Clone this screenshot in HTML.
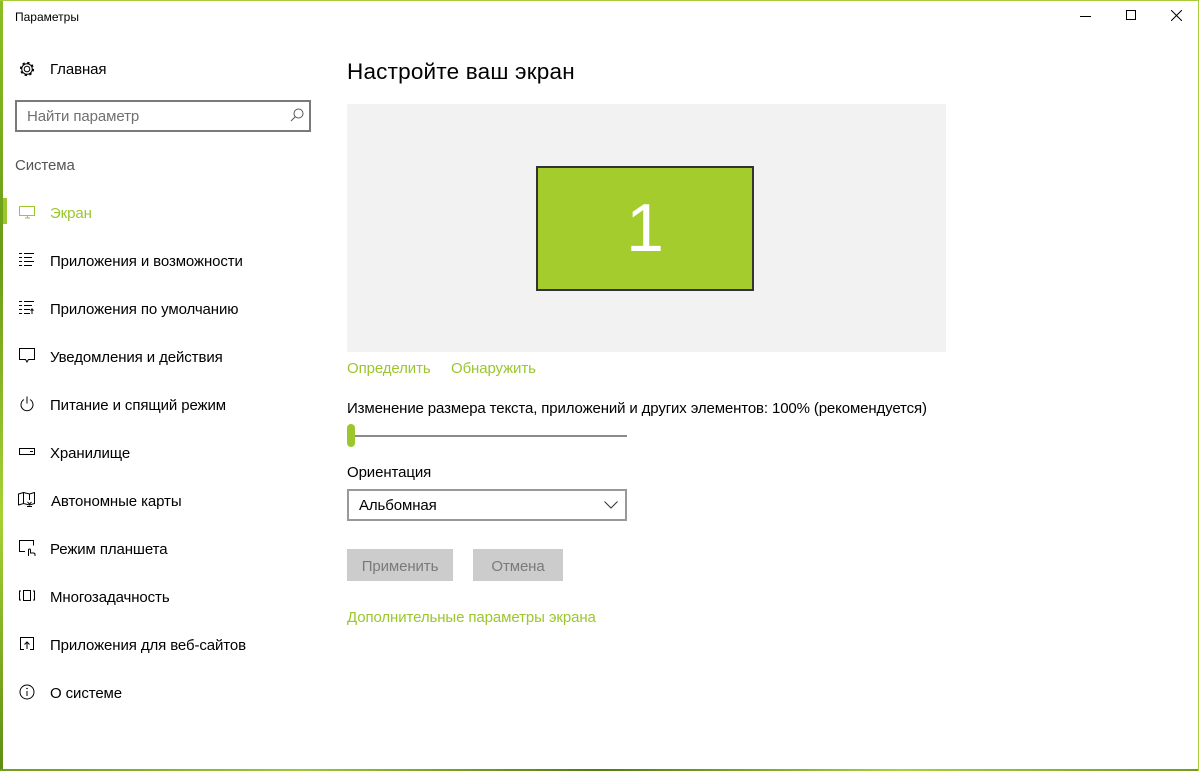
<!DOCTYPE html>
<html><head><meta charset="utf-8"><style>
*{margin:0;padding:0;box-sizing:border-box}
body{width:1199px;height:771px;overflow:hidden;background:#fff;font-family:"Liberation Sans",sans-serif;color:#000;position:relative}
.t{position:absolute;white-space:nowrap;font-size:15px;line-height:18px;letter-spacing:-0.1px}
.g{color:#9bc62d}
svg{position:absolute}
</style></head><body>
<div style="position:absolute;left:0;top:0;width:3px;height:771px;background:linear-gradient(#8cbf22,#6a9a18,#a6d235,#5e8d14)"></div>
<div style="position:absolute;left:0;top:0;width:1199px;height:1px;background:#a6cc3b"></div>
<div style="position:absolute;left:0;top:769px;width:1199px;height:2px;background:linear-gradient(90deg,#6f9e1c,#9bc930,#4f7d10,#a6d235,#6f9e1c)"></div>
<div style="position:absolute;right:0;top:0;width:1px;height:771px;background:#a6cc3b"></div>

<div class="t" style="left:15px;top:8px;font-size:12px;letter-spacing:0">Параметры</div>
<div style="position:absolute;left:1080px;top:16px;width:11px;height:1px;background:#000"></div>
<div style="position:absolute;left:1126px;top:10px;width:10px;height:10px;border:1px solid #000"></div>
<svg style="left:1171px;top:10px" width="11" height="11"><path d="M0 0L11 11M11 0L0 11" stroke="#000" stroke-width="1"/></svg>

<svg style="left:18px;top:60px" width="18" height="18" viewBox="0 0 18 18"><circle cx="9" cy="9" r="2.8" fill="none" stroke="#000"/><circle cx="9" cy="9" r="6.3" fill="none" stroke="#000" stroke-width="1.6" stroke-dasharray="2.4 2.55"/><circle cx="9" cy="9" r="5.3" fill="none" stroke="#000"/></svg>
<div class="t" style="left:50px;top:61px">Главная</div>

<div style="position:absolute;left:15px;top:100px;width:296px;height:32px;border:2px solid #7a7a7a"></div>
<div class="t" style="left:27px;top:108px;color:#707070">Найти параметр</div>
<svg style="left:290px;top:108px" width="14" height="14"><circle cx="8.5" cy="5.5" r="4.5" fill="none" stroke="#555"/><path d="M5.5 8.5L1 13" stroke="#555"/></svg>

<div class="t" style="left:15px;top:157px;color:#555">Система</div>

<div style="position:absolute;left:3px;top:198px;width:4px;height:26px;background:#9bc62d"></div>
<svg style="left:19px;top:206px" width="17" height="13"><rect x="0.5" y="0.5" width="15" height="9" fill="none" stroke="#9bc62d"/><path d="M6 12h5M8.5 10v2" stroke="#9bc62d"/></svg>
<div class="t g" style="left:50px;top:205px">Экран</div>

<svg style="left:19px;top:252px" width="16" height="15"><path d="M0 1.5h3M0 5.5h3M0 9.5h3M0 13.5h3M5 1.5h10M5 5.5h8M5 9.5h10M5 13.5h8" stroke="#000"/></svg>
<div class="t" style="left:50px;top:253px">Приложения и возможности</div>

<svg style="left:19px;top:300px" width="16" height="15"><path d="M0 1.5h3M0 5.5h3M0 9.5h3M0 13.5h3M5 1.5h10M5 5.5h8M5 9.5h6M5 13.5h6M13 9v5M11.5 10.5L13 9l1.5 1.5" stroke="#000" fill="none"/></svg>
<div class="t" style="left:50px;top:301px">Приложения по умолчанию</div>

<svg style="left:19px;top:348px" width="17" height="16"><path d="M0.5 0.5h15v11h-6l-1.5 2.5-1.5-2.5h-6z" fill="none" stroke="#000"/></svg>
<div class="t" style="left:50px;top:349px">Уведомления и действия</div>

<svg style="left:19px;top:396px" width="16" height="16"><path d="M5 3.5A6 6 0 1 0 11 3.5M8 0.5v7" fill="none" stroke="#000"/></svg>
<div class="t" style="left:50px;top:397px">Питание и спящий режим</div>

<svg style="left:19px;top:448px" width="17" height="8"><rect x="0.5" y="0.5" width="15" height="6" fill="none" stroke="#000"/><path d="M11 3.5h3" stroke="#000"/></svg>
<div class="t" style="left:50px;top:445px">Хранилище</div>

<svg style="left:18px;top:492px" width="18" height="16"><path d="M0.5 2l5-1.5 6 1.5 5-1.5v11l-5 1.5-6-1.5-5 1.5zM5.5 0.5v11M11.5 2v6M9.5 10l2 2 2-2M9 14.5h5" fill="none" stroke="#000"/></svg>
<div class="t" style="left:51px;top:493px">Автономные карты</div>

<svg style="left:19px;top:540px" width="18" height="17"><path d="M6 11.5H0.5v-11h14v5M9.5 16v-6a1 1 0 0 1 2 0v3h3a1.5 1.5 0 0 1 1.5 1.5V16" fill="none" stroke="#000"/></svg>
<div class="t" style="left:50px;top:541px">Режим планшета</div>

<svg style="left:19px;top:590px" width="16" height="12"><rect x="4.5" y="0.5" width="7" height="10" fill="none" stroke="#000"/><path d="M2 1H0.5v9H2M14 1h1.5v9H14" fill="none" stroke="#000"/></svg>
<div class="t" style="left:50px;top:589px">Многозадачность</div>

<svg style="left:20px;top:637px" width="15" height="13"><path d="M4 12.5H0.5v-12h13v12H10M7 12V5M4.5 7.5L7 5l2.5 2.5" fill="none" stroke="#000"/></svg>
<div class="t" style="left:50px;top:637px">Приложения для веб-сайтов</div>

<svg style="left:19px;top:684px" width="17" height="17"><circle cx="8" cy="8" r="7" fill="none" stroke="#000"/><path d="M8 7v5" stroke="#000"/><circle cx="8" cy="4.5" r="0.8"/></svg>
<div class="t" style="left:50px;top:685px">О системе</div>

<div class="t" style="left:347px;top:59px;font-size:22.5px;line-height:26px;letter-spacing:0.2px">Настройте ваш экран</div>
<div style="position:absolute;left:347px;top:104px;width:599px;height:248px;background:#f2f2f2"></div>
<div style="position:absolute;left:536px;top:166px;width:218px;height:125px;background:#a4cc2c;border:2px solid #333"></div>
<div class="t" style="left:536px;top:190px;width:218px;text-align:center;font-size:68px;line-height:76px;color:#fff;font-weight:300">1</div>

<div class="t g" style="left:347px;top:360px">Определить</div>
<div class="t g" style="left:451px;top:360px">Обнаружить</div>

<div class="t" style="left:347px;top:400px;letter-spacing:-0.13px">Изменение размера текста, приложений и других элементов: 100% (рекомендуется)</div>
<div style="position:absolute;left:347px;top:435px;width:280px;height:2px;background:#8a8a8a"></div>
<div style="position:absolute;left:347px;top:424px;width:8px;height:23px;background:#9bc62d;border-radius:4px"></div>

<div class="t" style="left:347px;top:464px">Ориентация</div>
<div style="position:absolute;left:347px;top:489px;width:280px;height:32px;border:2px solid #999"></div>
<div class="t" style="left:359px;top:497px">Альбомная</div>
<svg style="left:604px;top:501px" width="14" height="8"><path d="M0.5 0.5l6.5 6.5 6.5-6.5" fill="none" stroke="#333"/></svg>

<div style="position:absolute;left:347px;top:549px;width:106px;height:32px;background:#ccc"></div>
<div class="t" style="left:347px;top:558px;width:106px;text-align:center;color:#7a7a7a">Применить</div>
<div style="position:absolute;left:473px;top:549px;width:90px;height:32px;background:#ccc"></div>
<div class="t" style="left:473px;top:558px;width:90px;text-align:center;color:#7a7a7a">Отмена</div>

<div class="t g" style="left:347px;top:609px">Дополнительные параметры экрана</div>
</body></html>
